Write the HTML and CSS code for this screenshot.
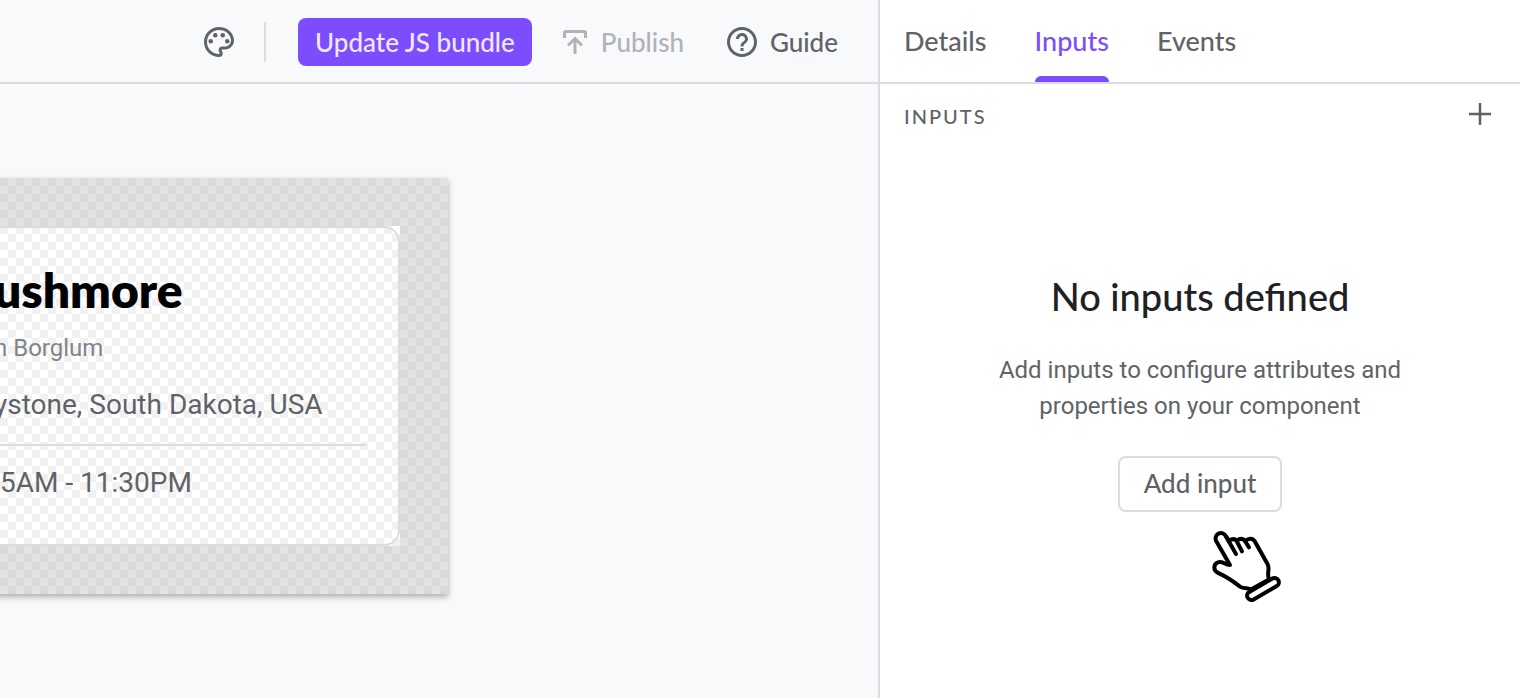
FILE: index.html
```html
<!DOCTYPE html>
<html lang="en">
<head>
<meta charset="utf-8">
<title>Component editor</title>
<link rel="stylesheet" href="styles.css">
</head>
<body>
<div class="editor">
  <main class="workspace">
    <header class="toolbar">
      <button class="icon-button" type="button" aria-label="Theme">
        <svg class="icon" viewBox="0 0 24 24"><path d="M12 22C6.49 22 2 17.51 2 12S6.49 2 12 2s10 4.04 10 9c0 3.31-2.69 6-6 6h-1.77c-.28 0-.5.22-.5.5 0 .12.05.23.13.33.41.47.64 1.06.64 1.67A2.5 2.5 0 0 1 12 22zm0-18c-4.41 0-8 3.59-8 8s3.59 8 8 8c.28 0 .5-.22.5-.5a.54.54 0 0 0-.14-.35c-.41-.46-.63-1.05-.63-1.65a2.5 2.5 0 0 1 2.5-2.5H16c2.21 0 4-1.79 4-4 0-3.86-3.59-7-8-7z"/><circle cx="6.5" cy="11.5" r="1.5"/><circle cx="9.5" cy="7.5" r="1.5"/><circle cx="14.5" cy="7.5" r="1.5"/><circle cx="17.5" cy="11.5" r="1.5"/></svg>
      </button>
      <span class="divider"></span>
      <button class="primary" type="button">Update JS bundle</button>
      <button class="tool publish" type="button" disabled>
        <svg class="icon line" viewBox="0 0 36 36"><path d="M7.500 14V9a1.500 1.500 0 0 1 1.500-1.500h18A1.500 1.500 0 0 1 28.500 9v5M18 30V15M11 21.500l7-7 7 7"/></svg>
        Publish
      </button>
      <button class="tool" type="button">
        <svg class="icon" viewBox="0 0 24 24"><path d="M11 18h2v-2h-2v2zm1-16C6.480 2 2 6.480 2 12s4.480 10 10 10 10-4.480 10-10S17.520 2 12 2zm0 18c-4.410 0-8-3.590-8-8s3.590-8 8-8 8 3.590 8 8-3.590 8-8 8zm0-14c-2.210 0-4 1.790-4 4h2c0-1.100.9-2 2-2s2 .9 2 2c0 2-3 1.750-3 5h2c0-2.250 3-2.500 3-5 0-2.210-1.790-4-4-4z"/></svg>
        Guide
      </button>
    </header>
    <section class="canvas">
      <div class="stage">
        <div class="component">
          <article class="card">
            <h1 class="card-title">ushmore</h1>
            <p class="card-author">n Borglum</p>
            <p class="card-row">ystone, South Dakota, USA</p>
            <hr class="card-rule">
            <p class="card-row hours">5AM - 11:30PM</p>
          </article>
        </div>
      </div>
    </section>
  </main>
  <aside class="panel">
    <nav class="tabs">
      <a class="tab" href="#details">Details</a>
      <a class="tab active" href="#inputs" aria-current="page">Inputs</a>
      <a class="tab" href="#events">Events</a>
    </nav>
    <div class="section-head">
      <h2 class="section-title">INPUTS</h2>
      <button class="icon-button" type="button" aria-label="Add">
        <svg class="icon line thin" viewBox="0 0 36 36"><path d="M18 7v22M7 18h22"/></svg>
      </button>
    </div>
    <section class="empty">
      <h3 class="empty-title">No inputs defined</h3>
      <p class="empty-text">Add inputs to configure attributes and properties on your component</p>
      <div class="action">
        <button class="outlined" type="button">Add input</button>
        <svg class="pointer" viewBox="0 0 330 330"><path class="skin" d="M120 165L78 92C71 70 98 60 108 79L117 93Q131 82 140 92Q156 81 165 93Q184 78 195 95L233 163C241 179 228 192 238 208L180 240C176 230 164 239 150 230C128 212 106 199 83 188C69 180 70 162 84 157C98 152 104 165 120 165Z"/><path d="M109 81L138 132M140 93L156 124M165 93L177 112"/><rect class="skin" x="-53" y="-13" width="106" height="26" rx="13" transform="translate(219 237) rotate(-30)"/></svg>
      </div>
    </section>
  </aside>
</div>
</body>
</html>
```
FILE: styles.css
```css
* { box-sizing: border-box; }
body {
  margin: 0;
  font-family: Lato, "Open Sans", sans-serif;
  font-size: 26px;
  font-weight: 500;
  color: #5f6368;
  background: #f8f9fb;
}
h1, h2, h3, p { margin: 0; }
button { font: inherit; color: inherit; background: none; border: 0; padding: 0; }
.editor { display: flex; min-height: 100vh; }
.workspace { flex: 1; min-width: 0; display: flex; flex-direction: column; overflow: hidden; }
.toolbar {
  height: 84px;
  padding: 2px 40px 0 0;
  border-bottom: 2px solid #dadce0;
  display: flex;
  align-items: center;
  justify-content: flex-end;
}
.icon { display: block; width: 36px; height: 36px; fill: currentColor; }
.icon.line { fill: none; stroke: currentColor; stroke-width: 3; }
.icon.thin { stroke-width: 2.500; }
.divider { width: 2px; height: 40px; margin: 0 32px 0 27px; background: #dadce0; }
.primary {
  height: 48px;
  padding: 0 17px;
  border-radius: 8px;
  background: #7c4dff;
  color: #efe9ff;
}
.tool { display: flex; align-items: center; gap: 8px; margin-left: 40px; }
.tool:last-child { gap: 10px; }
.publish { margin-left: 25px; color: #b0b2b5; }
.canvas { flex: 1; padding-top: 94px; display: flex; align-items: flex-start; }
.stage {
  flex: 0 1 464px;
  margin-left: -16px;
  padding: 48px 48px 48px 0;
  background: repeating-conic-gradient(#e3e3e3 0 25%, #d9d9d9 0 50%) 0 0 / 16px 16px;
  box-shadow: 0 3px 6px rgba(0, 0, 0, .3);
}
.component { background: repeating-conic-gradient(#fff 0 25%, #f1f1f1 0 50%) 0 0 / 16px 16px; }
.card {
  height: 320px;
  padding: 30px 32px 0 10px;
  border: 2px solid #dadce0;
  border-left: 0;
  border-radius: 0 16px 16px 0;
}
.card-title { font-size: 48px; line-height: 64px; font-weight: 800; color: #000; }
.card-author { margin-top: 8px; font: 24px/36px Roboto, sans-serif; color: #80868b; }
.card-row { margin-top: 19px; font: 28px/40px Roboto, sans-serif; }
.card-rule { margin: 19px 0 0; border: 0; border-top: 2px solid #dadce0; }
.card-row.hours { margin-top: 17px; padding-left: 6px; }
.panel { flex: 0 0 642px; background: #fff; border-left: 2px solid #dadce0; }
.tabs { height: 84px; padding: 0 24px; display: flex; gap: 48px; border-bottom: 2px solid #dadce0; font-size: 27px; }
.tab { position: relative; line-height: 82px; color: inherit; text-decoration: none; }
.tab.active { color: #7c4dff; }
.tab.active::after {
  content: "";
  position: absolute;
  inset: auto 0 0 0;
  height: 6px;
  border-radius: 6px 6px 0 0;
  background: #7c4dff;
}
.section-head { padding: 12px 22px 0 24px; display: flex; justify-content: space-between; align-items: center; }
.section-title { padding-top: 4px; font-size: 20px; line-height: 24px; font-weight: 500; letter-spacing: 2px; }
.empty { padding: 140px 112px 0; display: flex; flex-direction: column; align-items: center; text-align: center; }
.empty-title { font-size: 38px; line-height: 48px; font-weight: 500; color: #202124; }
.empty-text { margin-top: 32px; font: 24px/36px Roboto, sans-serif; }
.action { position: relative; margin-top: 32px; }
.outlined { height: 56px; padding: 0 24px 2px; border: 2px solid #dadce0; border-radius: 8px; }
.pointer {
  position: absolute;
  left: 72px;
  top: 54px;
  width: 110px;
  height: 110px;
  fill: none;
  stroke: #000;
  stroke-width: 12;
  stroke-linecap: round;
  stroke-linejoin: round;
}
.skin { fill: #fff; }
```
